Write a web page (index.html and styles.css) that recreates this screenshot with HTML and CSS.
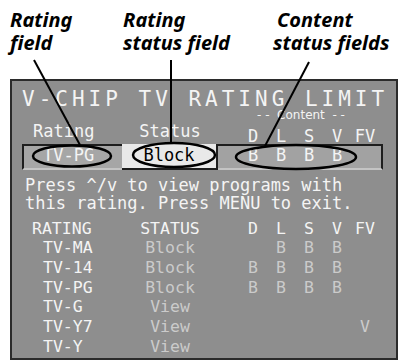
FILE: index.html
```html
<!DOCTYPE html>
<html>
<head>
  <title>V-Chip TV Rating Limit</title>
  <link rel="stylesheet" href="styles.css">
</head>
<body>
  <div class="page">
    <div class="labels">
      <div class="label">Rating<br>field</div>
      <div class="label">Rating<br>status field</div>
      <div class="label"><span class="indent">Content</span><br>status fields</div>
    </div>

    <div class="screen">
      <div class="title">V-CHIP TV RATING LIMIT</div>
      <div class="caption">- -  Content  - -</div>

      <div class="row top-head">
        <div class="rating">Rating</div>
        <div class="status">Status</div>
        <div class="content"><span>D</span><span>L</span><span>S</span><span>V</span><span>FV</span></div>
      </div>

      <div class="row current">
        <div class="rating">TV-PG</div>
        <div class="status">Block</div>
        <div class="content"><span>B</span><span>B</span><span>B</span><span>B</span><span></span></div>
      </div>

      <p class="help">Press ^/v to view programs with<br>this rating. Press MENU to exit.</p>

      <div class="list">
        <div class="row list-head">
          <div class="rating">RATING</div>
          <div class="status">STATUS</div>
          <div class="content"><span>D</span><span>L</span><span>S</span><span>V</span><span>FV</span></div>
        </div>
        <div class="row">
          <div class="rating">TV-MA</div>
          <div class="status dim">Block</div>
          <div class="content dim"><span></span><span>B</span><span>B</span><span>B</span><span></span></div>
        </div>
        <div class="row">
          <div class="rating">TV-14</div>
          <div class="status dim">Block</div>
          <div class="content dim"><span>B</span><span>B</span><span>B</span><span>B</span><span></span></div>
        </div>
        <div class="row">
          <div class="rating">TV-PG</div>
          <div class="status dim">Block</div>
          <div class="content dim"><span>B</span><span>B</span><span>B</span><span>B</span><span></span></div>
        </div>
        <div class="row">
          <div class="rating">TV-G</div>
          <div class="status dim">View</div>
          <div class="content dim"><span></span><span></span><span></span><span></span><span></span></div>
        </div>
        <div class="row">
          <div class="rating">TV-Y7</div>
          <div class="status dim">View</div>
          <div class="content dim"><span></span><span></span><span></span><span></span><span>V</span></div>
        </div>
        <div class="row">
          <div class="rating">TV-Y</div>
          <div class="status dim">View</div>
          <div class="content dim"><span></span><span></span><span></span><span></span><span></span></div>
        </div>
      </div>
    </div>

    <!-- callout lines and rings drawn over the screen -->
    <svg class="callouts" width="401" height="362" viewBox="0 0 401 362">
      <g fill="none" stroke="#000">
        <line x1="34" y1="60" x2="80" y2="145" stroke-width="2"/>
        <line x1="171" y1="60" x2="171" y2="143" stroke-width="2"/>
        <line x1="309" y1="62" x2="265" y2="146" stroke-width="2"/>
        <ellipse cx="72" cy="156" rx="39" ry="10.5" stroke-width="2.5"/>
        <ellipse cx="174" cy="155" rx="41" ry="12" stroke-width="2.5"/>
        <ellipse cx="296" cy="157" rx="60" ry="12" stroke-width="2.5"/>
      </g>
    </svg>
  </div>
</body>
</html>
```

FILE: styles.css
```css
body { margin: 0; background: #fff; }
.page { position: relative; width: 401px; height: 362px; overflow: hidden; }

.labels { display: grid; grid-template-columns: 113px 150px 1fr; height: 79px; padding-left: 10px; box-sizing: border-box; }
.label { font-family: "Noto Sans", sans-serif; font-weight: bold; font-style: italic; font-size: 20px; line-height: 23px; padding-top: 8px; color: #000; }
.indent { margin-left: 4px; }

.screen { margin-left: 10px; width: 388px; height: 281px; box-sizing: border-box; border: 2px solid #2b2b2b; background: #8e8e8e; padding-left: 10px; font-family: "DejaVu Sans Mono", monospace; color: #f4f4f4; }

.title { margin-top: 7px; font-size: 21px; line-height: 22px; letter-spacing: 4px; white-space: nowrap; }
.caption { margin-left: 235px; font-family: "DejaVu Sans", sans-serif; font-size: 12px; line-height: 10px; white-space: pre; }

.row { display: flex; font-size: 16.5px; line-height: 19.7px; }
.rating { width: 100px; padding-left: 21px; box-sizing: border-box; white-space: nowrap; }
.status { width: 96px; text-align: center; box-sizing: border-box; }
.content { display: flex; width: 165px; padding-left: 21px; box-sizing: border-box; }
.content span { width: 28px; text-align: center; }
.dim { color: #cbcbcb; }

.top-head { margin-top: 1px; height: 23px; font-size: 17px; line-height: 20px; }
.top-head .rating { padding-left: 11px; }
.top-head .content { padding-top: 5px; }

.current { height: 26px; font-size: 17px; line-height: 18px; }
.current > div { height: 26px; padding-top: 2px; }
.current .rating { background: #a6a6a6; border-top: 2px solid #1e1e1e; border-left: 2px solid #1e1e1e; border-bottom: 2px solid #c4c4c4; padding-top: 0; padding-left: 19px; }
.current .status { background: #e9e9e9; color: #000; border-right: 2px solid #1e1e1e; border-bottom: 2px solid #1e1e1e; }
.current .content { background: #a2a2a2; border-top: 2px solid #1e1e1e; border-right: 2px solid #1e1e1e; border-bottom: 2px solid #c4c4c4; padding-top: 0; }

.help { margin: 6px 0 0 3px; font-size: 17px; line-height: 18px; white-space: nowrap; }

.list { margin-top: 6.5px; }
.list-head .rating { padding-left: 10px; }

.callouts { position: absolute; left: 0; top: 0; pointer-events: none; }
```
